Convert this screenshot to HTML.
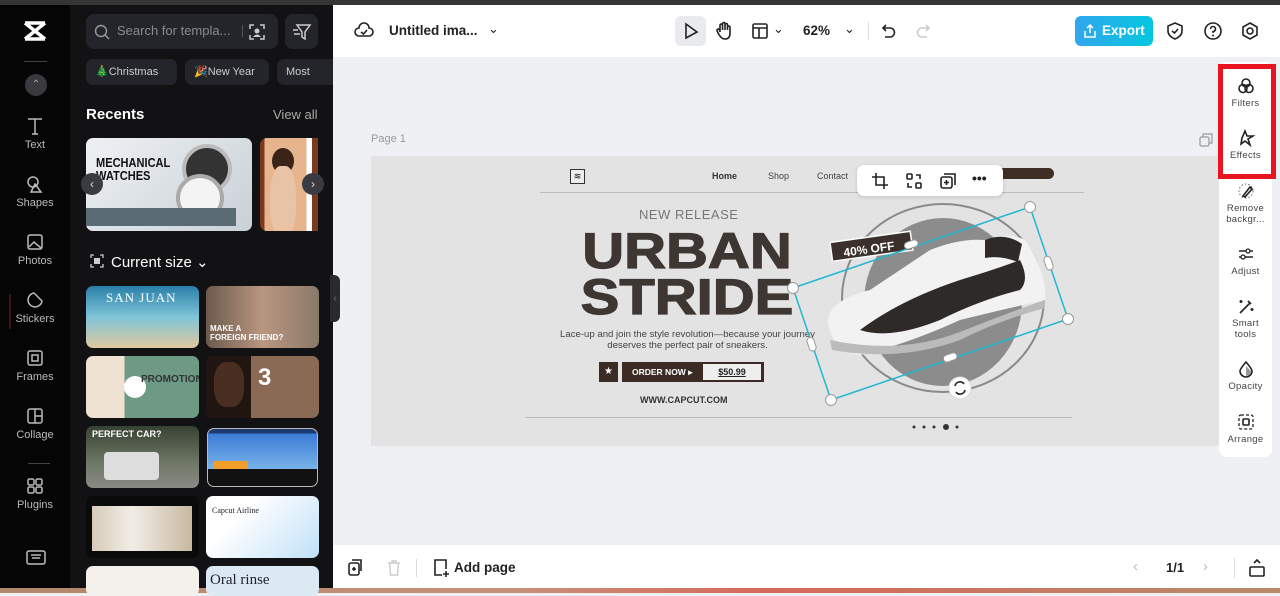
<!DOCTYPE html>
<html><head><meta charset="utf-8"><style>
*{box-sizing:border-box;margin:0;padding:0}
body{width:1280px;height:593px;overflow:hidden;font-family:"Liberation Sans",sans-serif;background:#eef0f3;position:relative}
.a{position:absolute}
.nav{left:0;top:5px;width:70px;height:583px;background:#050505}
.navi{position:absolute;left:0;width:70px;text-align:center;color:#bbb;font-size:11px}
.navi svg{display:block;margin:0 auto 3px}
.panel{left:70px;top:5px;width:263px;height:583px;background:#121214}
.chip{position:absolute;top:54px;height:26px;border-radius:7px;background:#24252a;color:#ccc;font-size:11px;line-height:26px;padding:0 9px}
.th{position:absolute;border-radius:7px;overflow:hidden}
.ic{stroke:#222;fill:none;stroke-width:1.6}
.rp{position:absolute;left:1219px;width:53px;text-align:center;font-size:9.5px;color:#444;letter-spacing:.3px;line-height:11px}
.rp svg{display:block;margin:0 auto 3px}
</style></head><body>
<div class="a" style="left:0;top:0;width:1280px;height:5px;background:#353535"></div>
<div class="a" style="left:0;top:588px;width:1280px;height:5px;background:linear-gradient(90deg,#b0886a,#c8907a 40%,#d66a5a 60%,#b88a6a)"></div>

<div class="a nav">
  <svg class="a" style="left:22px;top:14px" width="26" height="24" viewBox="0 0 26 24"><path d="M3 4 L23 20 M23 4 L3 20 M3 4 H23 M3 20 H23" stroke="#fff" stroke-width="3.5" fill="none"/></svg>
  <div class="a" style="left:24px;top:56px;width:23px;height:1px;background:#444"></div>
  <div class="a" style="left:25px;top:69px;width:22px;height:22px;border-radius:50%;background:#3a3a3e;color:#aaa;font-size:10px;text-align:center;line-height:22px">⌃</div>
  <div class="navi" style="top:111px"><svg width="20" height="20"><path d="M3 3H17M10 3V18M7 18H13" stroke="#bbb" stroke-width="1.5" fill="none"/></svg>Text</div>
  <div class="navi" style="top:169px"><svg width="20" height="20"><circle cx="8" cy="8" r="5" stroke="#bbb" stroke-width="1.5" fill="none"/><path d="M10 10L16 18H6Z" stroke="#bbb" stroke-width="1.5" fill="none"/></svg>Shapes</div>
  <div class="navi" style="top:227px"><svg width="20" height="20"><rect x="3" y="3" width="14" height="14" rx="2" stroke="#bbb" stroke-width="1.5" fill="none"/><path d="M4 15L9 10L16 16" stroke="#bbb" stroke-width="1.5" fill="none"/></svg>Photos</div>
  <div class="a" style="left:9px;top:289px;width:2px;height:35px;background:#3a1515"></div>
  <div class="navi" style="top:285px"><svg width="20" height="20"><path d="M17 11A7 7 0 1 1 9 3L17 11Z" stroke="#bbb" stroke-width="1.5" fill="none"/></svg>Stickers</div>
  <div class="navi" style="top:343px"><svg width="20" height="20"><rect x="3" y="3" width="14" height="14" rx="2" stroke="#bbb" stroke-width="1.5" fill="none"/><rect x="7" y="7" width="6" height="6" stroke="#bbb" stroke-width="1.5" fill="none"/></svg>Frames</div>
  <div class="navi" style="top:401px"><svg width="20" height="20"><rect x="3" y="3" width="14" height="14" rx="2" stroke="#bbb" stroke-width="1.5" fill="none"/><path d="M10 3V17M10 10H17" stroke="#bbb" stroke-width="1.5"/></svg>Collage</div>
  <div class="a" style="left:28px;top:458px;width:22px;height:1px;background:#444"></div>
  <div class="navi" style="top:471px"><svg width="20" height="20"><rect x="3" y="3" width="6" height="6" rx="1.5" stroke="#bbb" stroke-width="1.5" fill="none"/><rect x="11" y="3" width="6" height="6" rx="1.5" stroke="#bbb" stroke-width="1.5" fill="none"/><rect x="3" y="11" width="6" height="6" rx="1.5" stroke="#bbb" stroke-width="1.5" fill="none"/><rect x="11" y="11" width="6" height="6" rx="1.5" stroke="#bbb" stroke-width="1.5" fill="none"/></svg>Plugins</div>
  <svg class="a" style="left:26px;top:545px" width="20" height="16"><rect x="1" y="1" width="18" height="13" rx="2" stroke="#bbb" stroke-width="1.5" fill="none"/><path d="M5 5H15M6 8H14" stroke="#bbb" stroke-width="1.5"/></svg>
</div>

<div class="a panel">
  <div class="a" style="left:16px;top:9px;width:192px;height:35px;border-radius:8px;background:#24252a"></div>
  <svg class="a" style="left:24px;top:19px" width="16" height="16"><circle cx="7" cy="7" r="5.5" stroke="#999" stroke-width="1.4" fill="none"/><path d="M11 11L15 15" stroke="#999" stroke-width="1.4"/></svg>
  <div class="a" style="left:47px;top:18px;color:#8a8a8e;font-size:13px">Search for templa...</div>
  <div class="a" style="left:172px;top:20px;width:1px;height:12px;background:#555"></div>
  <svg class="a" style="left:178px;top:18px" width="18" height="18"><path d="M2 6V2H6M12 2H16V6M16 12V16H12M6 16H2V12" stroke="#ccc" stroke-width="1.5" fill="none"/><circle cx="9" cy="8" r="2.5" fill="#ccc"/><path d="M5 14Q9 9 13 14" fill="#ccc"/></svg>
  <div class="a" style="left:215px;top:9px;width:33px;height:35px;border-radius:8px;background:#24252a"></div>
  <svg class="a" style="left:222px;top:18px" width="20" height="18"><path d="M5 2H18L13 9V16L10 14V9Z M1 7H6M2 11H8" stroke="#ccc" stroke-width="1.5" fill="none"/></svg>
  <div class="chip" style="left:16px;width:91px">🎄Christmas</div>
  <div class="chip" style="left:115px;width:84px">🎉New Year</div>
  <div class="chip" style="left:207px;width:56px;border-radius:7px 0 0 7px">Most</div>
  <div class="a" style="left:16px;top:101px;color:#fff;font-size:15px;font-weight:bold">Recents</div>
  <div class="a" style="left:203px;top:102px;color:#aaa;font-size:13px">View all</div>
  <div class="th" style="left:16px;top:133px;width:166px;height:93px;background:linear-gradient(135deg,#eef1f4,#c9d0d6)">
    <div class="a" style="left:10px;top:18px;font-size:13px;font-weight:bold;color:#111;line-height:13px;transform:scaleX(.85);transform-origin:left">MECHANICAL<br>WATCHES</div>
    <div class="a" style="left:96px;top:6px;width:50px;height:50px;border-radius:50%;background:#333;border:4px solid #bbb"></div>
    <div class="a" style="left:90px;top:36px;width:48px;height:48px;border-radius:50%;background:#f4f4f4;border:4px solid #aaa"></div>
    <div class="a" style="left:0;top:70px;width:150px;height:18px;background:#5b6b74"></div>
  </div>
  <div class="th" style="left:190px;top:133px;width:58px;height:93px;border-radius:7px 0 0 7px;background:linear-gradient(90deg,#7a3a20 0 8%,#e6b58e 8% 80%,#fff 80% 90%,#7a3a20 90%)">
    <div class="a" style="left:12px;top:10px;width:22px;height:26px;border-radius:50%;background:#3a2418"></div>
    <div class="a" style="left:10px;top:28px;width:26px;height:70px;border-radius:40%;background:#e8c3a6"></div>
  </div>
  <div class="a" style="left:11px;top:168px;width:22px;height:22px;border-radius:50%;background:#3a3b40;color:#ddd;text-align:center;line-height:22px;font-size:12px">‹</div>
  <div class="a" style="left:232px;top:168px;width:22px;height:22px;border-radius:50%;background:#3a3b40;color:#ddd;text-align:center;line-height:22px;font-size:12px">›</div>
  <svg class="a" style="left:20px;top:249px" width="14" height="14"><path d="M1 4V1H4M10 1H13V4M13 10V13H10M4 13H1V10" stroke="#ccc" stroke-width="1.3" fill="none"/><rect x="4" y="4" width="6" height="6" fill="#ccc"/></svg>
  <div class="a" style="left:41px;top:248px;color:#fff;font-size:15px">Current size ⌄</div>
  <div class="th" style="left:16px;top:281px;width:113px;height:62px;background:linear-gradient(180deg,#2a7fa8,#7fc4d8 50%,#e0c9a0)"><div class="a" style="left:20px;top:4px;color:#fff;font-size:13px;font-family:'Liberation Serif',serif;letter-spacing:1px">SAN JUAN</div></div>
  <div class="th" style="left:136px;top:281px;width:113px;height:62px;background:linear-gradient(90deg,#6b5a4c,#b99680,#8a7a6a)"><div class="a" style="left:4px;top:38px;color:#fff;font-size:8px;font-weight:bold;line-height:9px">MAKE A<br>FOREIGN FRIEND?</div></div>
  <div class="th" style="left:16px;top:351px;width:113px;height:62px;background:linear-gradient(90deg,#efe2d2 0 34%,#6e9a85 34%)"><div class="a" style="left:38px;top:20px;width:22px;height:22px;border-radius:50%;background:#fff"></div><div class="a" style="left:55px;top:18px;color:#333;font-size:10px;font-weight:bold">PROMOTION</div></div>
  <div class="th" style="left:136px;top:351px;width:113px;height:62px;background:linear-gradient(90deg,#201510 0 40%,#8b6a55 40%)"><div class="a" style="left:52px;top:8px;color:#fff;font-size:24px;font-weight:bold">3</div><div class="a" style="left:8px;top:6px;width:30px;height:45px;border-radius:40%;background:#4a2e22"></div></div>
  <div class="th" style="left:16px;top:421px;width:113px;height:62px;background:linear-gradient(180deg,#384232,#6f7766 60%,#8a8a86)"><div class="a" style="left:6px;top:3px;color:#fff;font-size:9px;font-weight:bold">PERFECT CAR?</div><div class="a" style="left:18px;top:26px;width:55px;height:28px;background:#ddd;border-radius:4px"></div></div>
  <div class="th" style="left:137px;top:423px;width:111px;height:59px;border:1px solid #bbb;background:linear-gradient(180deg,#1a3a70 0 8%,#3d7bd4 8%,#78b3ea 70%,#111 70%)"><div class="a" style="left:5px;top:32px;width:35px;height:8px;background:#f0a02a"></div></div>
  <div class="th" style="left:16px;top:491px;width:113px;height:62px;background:#0a0a0a"><div class="a" style="left:6px;top:10px;width:100px;height:45px;background:linear-gradient(90deg,#d8cbb8,#f1ede6 40%,#c8b8a0)"></div></div>
  <div class="th" style="left:136px;top:491px;width:113px;height:62px;background:linear-gradient(135deg,#fff 30%,#bfe0f7)"><div class="a" style="left:6px;top:10px;color:#223;font-size:8px;font-family:'Liberation Serif',serif">Capcut Airline</div></div>
  <div class="th" style="left:16px;top:561px;width:113px;height:30px;background:#f4f1ec"></div>
  <div class="th" style="left:136px;top:561px;width:113px;height:30px;background:#dbe9f3"><div class="a" style="left:4px;top:6px;color:#223;font-size:15px;font-family:'Liberation Serif',serif">Oral rinse</div></div>
</div>
<div class="a" style="left:330px;top:275px;width:10px;height:47px;border-radius:0 6px 6px 0;background:#2a2a2e;color:#777;font-size:10px;line-height:47px;text-align:center">‹</div>

<div class="a" style="left:333px;top:5px;width:947px;height:52px;background:#fff"></div>
<svg class="a" style="left:354px;top:21px" width="20" height="18"><path d="M5 15H15A4 4 0 0 0 15 7A5 5 0 0 0 5 7A4 4 0 0 0 5 15Z" class="ic"/><path d="M7 11L9.5 13L13 9" class="ic"/></svg>
<div class="a" style="left:389px;top:23px;font-size:13.5px;font-weight:bold;color:#222">Untitled ima...</div>
<div class="a" style="left:488px;top:21px;font-size:13px;color:#222">⌄</div>
<div class="a" style="left:675px;top:16px;width:31px;height:30px;border-radius:6px;background:#e8eaee"></div>
<svg class="a" style="left:682px;top:22px" width="18" height="18"><path d="M4 2L15 10L4 16Z" class="ic"/></svg>
<svg class="a" style="left:715px;top:21px" width="18" height="20"><path d="M5 11V4A1.3 1.3 0 0 1 7.5 4V9M7.5 9V2.5A1.3 1.3 0 0 1 10 2.5V9M10 9V3.5A1.3 1.3 0 0 1 12.5 3.5V9M12.5 9V6A1.3 1.3 0 0 1 15 6V12Q15 18 10 18Q6 18 3 12L2 9.5A1.2 1.2 0 0 1 4.5 9L5 11" class="ic" stroke-width="1.4"/></svg>
<svg class="a" style="left:751px;top:22px" width="18" height="18"><rect x="2" y="2" width="14" height="14" rx="1.5" class="ic"/><path d="M2 6H16M8 6V16" class="ic"/></svg>
<div class="a" style="left:773px;top:21px;font-size:13px;color:#222">⌄</div>
<div class="a" style="left:803px;top:23px;font-size:13.5px;font-weight:bold;color:#222">62%</div>
<div class="a" style="left:844px;top:21px;font-size:13px;color:#222">⌄</div>
<div class="a" style="left:868px;top:22px;width:1px;height:18px;background:#ddd"></div>
<svg class="a" style="left:880px;top:22px" width="18" height="18"><path d="M6 3L3 6L6 9M3 6H10A4.5 4.5 0 0 1 10 15H5" class="ic"/></svg>
<svg class="a" style="left:914px;top:22px" width="18" height="18"><path d="M12 3L15 6L12 9M15 6H8A4.5 4.5 0 0 0 8 15H13" class="ic" style="stroke:#ccc"/></svg>
<div class="a" style="left:1075px;top:16px;width:78px;height:30px;border-radius:6px;background:linear-gradient(90deg,#32a6ee,#05c7df);color:#fff;font-size:13.5px;font-weight:bold;line-height:30px;padding-left:27px">Export</div>
<svg class="a" style="left:1083px;top:23px" width="14" height="16"><path d="M7 2V10M4 5L7 2L10 5M2 8V14H12V8" stroke="#fff" stroke-width="1.5" fill="none"/></svg>
<svg class="a" style="left:1166px;top:21px" width="18" height="20"><path d="M9 2L16 5V10Q16 15 9 18Q2 15 2 10V5Z" class="ic"/><path d="M6 10L8.5 12L12 8" class="ic"/></svg>
<svg class="a" style="left:1203px;top:21px" width="20" height="20"><circle cx="10" cy="10" r="8" class="ic"/><path d="M7.5 8A2.5 2.5 0 1 1 10 10.5V12" class="ic"/><circle cx="10" cy="14.5" r="1" fill="#222"/></svg>
<svg class="a" style="left:1240px;top:21px" width="20" height="20"><path d="M10 2L17 6V14L10 18L3 14V6Z" class="ic"/><circle cx="10" cy="10" r="3" class="ic"/></svg>

<div class="a" style="left:371px;top:133px;font-size:11px;color:#999">Page 1</div>
<svg class="a" style="left:1199px;top:133px" width="14" height="14"><rect x="1" y="4" width="9" height="9" rx="1.5" stroke="#999" stroke-width="1.2" fill="none"/><path d="M4 4V1H13V10H10" stroke="#999" stroke-width="1.2" fill="none"/></svg>
<div class="a" style="left:371px;top:156px;width:849px;height:290px;background:#e3e3e3"></div>
<div class="a" style="left:570px;top:169px;width:15px;height:15px;border:1.5px solid #333;background:#eee;font-size:9px;text-align:center;line-height:12px">≋</div>
<div class="a" style="left:712px;top:171px;font-size:9px;font-weight:bold;color:#333">Home</div>
<div class="a" style="left:768px;top:171px;font-size:9px;color:#444">Shop</div>
<div class="a" style="left:817px;top:171px;font-size:9px;color:#444">Contact</div>
<div class="a" style="left:990px;top:168px;width:64px;height:11px;border-radius:6px;background:#3e2e24"></div>
<div class="a" style="left:540px;top:192px;width:544px;height:1px;background:#bbb"></div>
<div class="a" style="left:525px;top:417px;width:547px;height:1px;background:#bbb"></div>
<div class="a" style="left:639px;top:207px;font-size:13px;color:#777;letter-spacing:.5px">NEW RELEASE</div>
<div class="a" style="left:537px;top:228px;width:300px;text-align:center;font-size:50px;font-weight:bold;color:#3e3632;line-height:46px;letter-spacing:0;transform:scaleX(1.16);-webkit-text-stroke:1.2px #3e3632">URBAN<br>STRIDE</div>
<div class="a" style="left:560px;top:329px;width:255px;text-align:center;font-size:9.6px;color:#444;line-height:11px">Lace-up and join the style revolution—because your journey deserves the perfect pair of sneakers.</div>
<div class="a" style="left:599px;top:362px;width:19px;height:20px;background:#3b2b24;color:#fff;font-size:10px;text-align:center;line-height:20px">★</div>
<div class="a" style="left:622px;top:362px;width:142px;height:20px;background:#3b2b24"></div>
<div class="a" style="left:632px;top:367px;font-size:8.5px;font-weight:bold;color:#fff">ORDER NOW ▸</div>
<div class="a" style="left:703px;top:364px;width:58px;height:16px;background:#eee;font-size:9px;font-weight:bold;text-align:center;line-height:16px;text-decoration:underline;color:#222">$50.99</div>
<div class="a" style="left:640px;top:395px;font-size:9px;font-weight:bold;color:#333">WWW.CAPCUT.COM</div>
<svg class="a" style="left:910px;top:422px" width="52" height="10"><g fill="#333"><circle cx="4" cy="5" r="1.5"/><circle cx="14" cy="5" r="1.5"/><circle cx="24" cy="5" r="1.5"/><circle cx="36" cy="5" r="3"/><circle cx="47" cy="5" r="1.5"/></g></svg>

<svg class="a" style="left:780px;top:195px" width="300" height="220" viewBox="780 195 300 220">
  <ellipse cx="943" cy="298" rx="101" ry="94" fill="none" stroke="#8a8a8a" stroke-width="2"/>
  <ellipse cx="943" cy="302" rx="79" ry="84" fill="#8c8c8c"/>
  <path d="M828 320 Q830 300 870 290 Q900 270 930 250 Q960 238 985 240 Q1010 232 1025 240 Q1048 275 1045 300 Q1000 310 960 320 Q905 345 860 355 Q830 350 828 320Z" fill="#f2f2f2"/>
  <path d="M860 330 Q900 300 960 280 Q1000 268 1020 260 Q1030 280 1020 290 Q980 300 940 320 Q890 340 860 330Z" fill="#2e2a28"/>
  <path d="M985 240 Q1005 232 1022 244 L1018 262 Q1000 255 985 258Z" fill="#2e2a28"/>
  <path d="M830 340 Q900 355 960 332 Q1010 312 1045 300 L1045 308 Q1000 320 960 340 Q900 362 832 350Z" fill="#bbb"/>
  <rect x="831" y="237" width="81" height="19" fill="#3b302c" stroke="#fff" stroke-width="1.5" transform="rotate(-8 870 247)"/>
  <text x="843" y="253" font-size="12" font-weight="bold" fill="#fff" font-family="Liberation Sans" transform="rotate(-8 870 247)">40% OFF</text>
  <polygon points="1030,207 1068,319 831,400 793,288" fill="none" stroke="#1fb8d0" stroke-width="1.5"/>
  <line x1="950" y1="360" x2="958" y2="385" stroke="#888" stroke-width="1"/>
  <g fill="#fff" stroke="#999" stroke-width="1"><circle cx="1030" cy="207" r="5.5"/><circle cx="1068" cy="319" r="5.5"/><circle cx="831" cy="400" r="5.5"/><circle cx="793" cy="288" r="5.5"/>
  <rect x="904" y="241" width="14" height="7" rx="3.5" transform="rotate(-19 911 244)"/><rect x="943" y="354" width="14" height="7" rx="3.5" transform="rotate(-19 950 357)"/>
  <rect x="1045" y="256" width="7" height="14" rx="3.5" transform="rotate(-19 1049 263)"/><rect x="808" y="337" width="7" height="14" rx="3.5" transform="rotate(-19 812 344)"/>
  <circle cx="960" cy="388" r="11" stroke="#ddd"/></g>
  <path d="M955 386A5 5 0 0 1 964 384M965 390A5 5 0 0 1 956 392" stroke="#222" stroke-width="1.6" fill="none"/>
</svg>

<div class="a" style="left:857px;top:165px;width:146px;height:31px;border-radius:7px;background:#fff;box-shadow:0 1px 4px rgba(0,0,0,.15)"></div>
<svg class="a" style="left:871px;top:172px" width="18" height="18"><path d="M5 1V13H17M1 5H13V17" class="ic"/></svg>
<svg class="a" style="left:905px;top:172px" width="18" height="18"><rect x="2" y="2" width="5" height="5" rx="1" class="ic"/><rect x="11" y="11" width="5" height="5" rx="1" class="ic"/><path d="M11 3H15V7M7 15H3V11" class="ic"/></svg>
<svg class="a" style="left:939px;top:172px" width="18" height="18"><rect x="2" y="5" width="11" height="11" rx="2" class="ic"/><path d="M5 2H16V13" class="ic"/><path d="M7.5 8V13M5 10.5H10" class="ic"/></svg>
<div class="a" style="left:972px;top:170px;font-size:14px;font-weight:bold;color:#222">•••</div>

<div class="a" style="left:1219px;top:62px;width:53px;height:395px;border-radius:8px;background:#fff"></div>
<div class="a" style="left:1218px;top:64px;width:58px;height:115px;border:5px solid #e8141f"></div>
<div class="rp" style="top:77px"><svg width="18" height="18"><circle cx="9" cy="6" r="4" class="ic" stroke-width="1.3"/><circle cx="6" cy="11.5" r="4" class="ic" stroke-width="1.3"/><circle cx="12" cy="11.5" r="4" class="ic" stroke-width="1.3"/></svg>Filters</div>
<div class="rp" style="top:129px"><svg width="18" height="18"><path d="M8 2L10 7L16 7L11 10L13 16L8 12L4 15L5 9Z" class="ic" stroke-width="1.3"/></svg>Effects</div>
<div class="rp" style="top:182px"><svg width="18" height="18"><circle cx="9" cy="9" r="7" stroke="#666" stroke-dasharray="1.5 2" fill="none"/><path d="M6 14L13 5L15 7L8 15Z" class="ic" stroke-width="1.3"/></svg>Remove<br>backgr...</div>
<div class="rp" style="top:245px"><svg width="18" height="18"><path d="M2 6H16M2 12H16" class="ic" stroke-width="1.3"/><circle cx="11" cy="6" r="2" fill="#fff" stroke="#222" stroke-width="1.3"/><circle cx="6" cy="12" r="2" fill="#fff" stroke="#222" stroke-width="1.3"/></svg>Adjust</div>
<div class="rp" style="top:297px"><svg width="18" height="18"><path d="M3 16L13 6M11 4L14 7" class="ic" stroke-width="1.4"/><path d="M4 3V6M2.5 4.5H5.5M15 11V14M13.5 12.5H16.5" class="ic" stroke-width="1.1"/></svg>Smart<br>tools</div>
<div class="rp" style="top:360px"><svg width="18" height="18"><path d="M9 2Q15 9 15 11A6 6 0 0 1 3 11Q3 9 9 2Z" class="ic" stroke-width="1.3"/><path d="M9 6V16A5 5 0 0 0 14 11Z" fill="#999"/></svg>Opacity</div>
<div class="rp" style="top:413px"><svg width="18" height="18"><rect x="2" y="2" width="14" height="14" rx="2" stroke="#222" stroke-dasharray="3 2" fill="none" stroke-width="1.3"/><rect x="6" y="6" width="6" height="6" rx="1" class="ic" stroke-width="1.3"/></svg>Arrange</div>

<div class="a" style="left:333px;top:545px;width:947px;height:43px;background:#fff"></div>
<svg class="a" style="left:347px;top:559px" width="16" height="18"><rect x="2" y="4" width="10" height="12" rx="2" class="ic"/><path d="M5 1H14V12" class="ic"/><path d="M7 8V12M5 10H9" class="ic"/></svg>
<svg class="a" style="left:386px;top:559px" width="16" height="18"><path d="M2 4H14M6 4V2H10V4M3.5 4L4.5 16H11.5L12.5 4" stroke="#ccc" stroke-width="1.4" fill="none"/></svg>
<div class="a" style="left:416px;top:559px;width:1px;height:18px;background:#ddd"></div>
<svg class="a" style="left:432px;top:558px" width="18" height="20"><path d="M10 17H3V2H14V11" class="ic"/><path d="M14 13V19M11 16H17" class="ic"/></svg>
<div class="a" style="left:454px;top:560px;font-size:13.5px;font-weight:bold;color:#222">Add page</div>
<div class="a" style="left:1133px;top:558px;font-size:15px;color:#bbb">‹</div>
<div class="a" style="left:1166px;top:560px;font-size:13px;font-weight:bold;color:#222">1/1</div>
<div class="a" style="left:1203px;top:558px;font-size:15px;color:#bbb">›</div>
<div class="a" style="left:1234px;top:558px;width:1px;height:20px;background:#ddd"></div>
<svg class="a" style="left:1248px;top:558px" width="18" height="20"><path d="M6 5L9 2L12 5" class="ic"/><rect x="2" y="9" width="14" height="9" rx="1" class="ic"/></svg>
</body></html>
